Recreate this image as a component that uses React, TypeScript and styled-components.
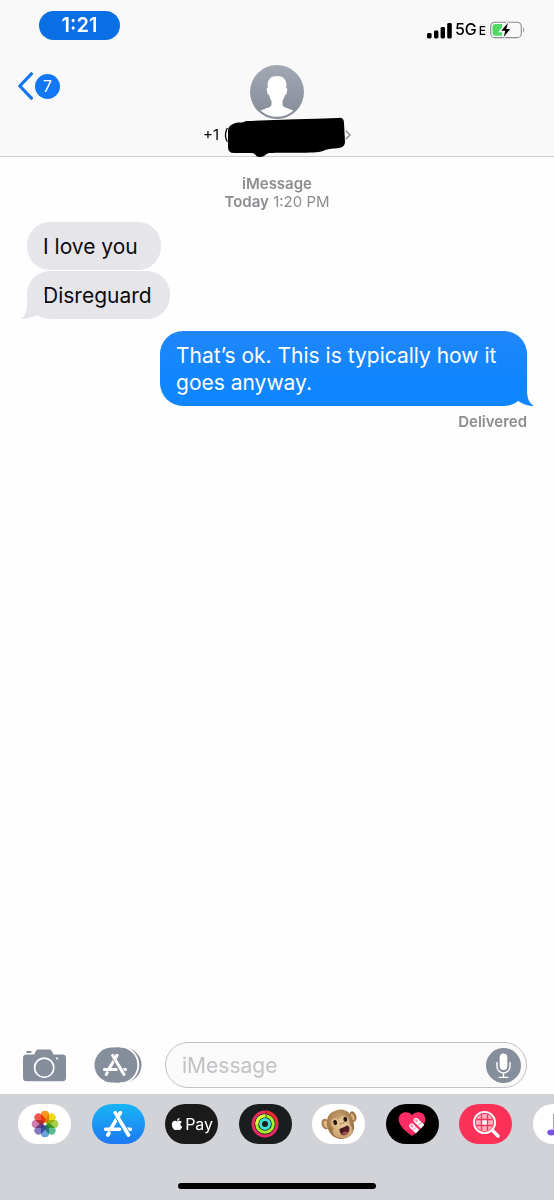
import React from "react";
import styled, { createGlobalStyle, css } from "styled-components";
import { FaApple } from "react-icons/fa";

const GlobalStyle = createGlobalStyle`
  *, *::before, *::after { box-sizing: border-box; }
  body {
    margin: 0;
    background: #ffffff;
    font-family: Inter, "Liberation Sans", sans-serif;
    -webkit-font-smoothing: antialiased;
  }
  button, input { font-family: inherit; }
`;

const Screen = styled.div`
  display: flex;
  flex-direction: column;
  min-height: 100vh;
  overflow: hidden;
  background: #fefefe;
`;

const Header = styled.header`
  background: #f9f9f9;
  border-bottom: 1px solid #cfcfd1;
`;

const StatusBar = styled.div`
  display: flex;
  justify-content: space-between;
  align-items: flex-start;
  padding: 11px 29px 0 39px;
`;

const TimePill = styled.time`
  width: 81px;
  border-radius: 15px;
  background: #0a6fe4;
  color: #ffffff;
  font-size: 20px;
  font-weight: 600;
  line-height: 29px;
  text-align: center;
`;

const StatusIcons = styled.div`
  display: flex;
  align-items: center;
  height: 20px;
  margin-top: 9px;
  color: #000000;
`;

const Network = styled.span`
  display: flex;
  align-items: baseline;
  gap: 2px;
  margin: 0 4px 0 3px;
  font-size: 16px;
  font-weight: 500;
  line-height: 20px;
`;

const NetworkSuffix = styled.span`
  font-size: 12px;
`;

const NavBar = styled.div`
  display: grid;
  grid-template-columns: 1fr auto 1fr;
  align-items: start;
  padding: 25px 18px 0;
`;

const BackButton = styled.button`
  display: flex;
  align-items: center;
  gap: 2px;
  justify-self: start;
  margin-top: 7px;
  padding: 0;
  border: 0;
  background: none;
`;

const UnreadBadge = styled.span`
  width: 25px;
  border-radius: 50%;
  background: #1377f5;
  color: #ffffff;
  font-size: 16px;
  line-height: 25px;
  text-align: center;
`;

const ContactButton = styled.button`
  display: flex;
  flex-direction: column;
  align-items: center;
  padding: 0;
  border: 0;
  background: none;
  color: #000000;
`;

const ContactLine = styled.span`
  position: relative;
  display: flex;
  align-items: center;
  justify-content: space-between;
  width: 148px;
  height: 37px;
  padding-bottom: 6px;
  font-size: 15px;
`;

const Marker = styled.svg`
  position: absolute;
  left: 23px;
  top: -2px;
`;

const Thread = styled.main`
  display: flex;
  flex: 1;
  flex-direction: column;
  padding: 18px 27px;
`;

const Stamp = styled.p`
  margin: 0 0 11px;
  color: #8c8c91;
  font-size: 15px;
  line-height: 18px;
  text-align: center;
`;

const StampStrong = styled.strong`
  font-weight: 600;
`;

const Bubble = styled.p<{ $sent?: boolean; $gap: number }>`
  position: relative;
  min-width: 134px;
  max-width: 367px;
  margin: ${(p) => p.$gap}px 0 0;
  padding: 11px 18px 10px 16px;
  border-radius: 23px;
  font-size: 21px;
  line-height: 27px;
  ${(p) =>
    p.$sent
      ? css`
          align-self: flex-end;
          background: linear-gradient(#2086fb, #1086fe calc(100% - 24px));
          color: #ffffff;
        `
      : css`
          align-self: flex-start;
          background: #e5e5ea;
          color: #0b0b0d;
        `}
`;

const TailShape = styled.svg<{ $sent?: boolean }>`
  position: absolute;
  bottom: 0;
  ${(p) => (p.$sent ? "right: -7px;" : "left: -6px;")}
`;

const Receipt = styled.p`
  align-self: flex-end;
  margin: 7px 0 0;
  color: #8c8c91;
  font-size: 15px;
  font-weight: 600;
  line-height: 18px;
`;

const Composer = styled.form`
  display: flex;
  align-items: center;
  padding: 0 27px 6px 23px;
`;

const ToolButton = styled.button<{ $after: number }>`
  display: flex;
  flex: none;
  margin-right: ${(p) => p.$after}px;
  padding: 0;
  border: 0;
  background: none;
`;

const Field = styled.div`
  display: flex;
  flex: 1;
  align-items: center;
  min-width: 0;
  height: 46px;
  padding: 0 5px 0 16px;
  border: 1px solid #c2c2c6;
  border-radius: 23px;
  background: #fafafa;
`;

const FieldInput = styled.input`
  flex: 1;
  min-width: 0;
  padding: 2px 0 0;
  border: 0;
  outline: 0;
  background: none;
  color: #000000;
  font-size: 21px;
  line-height: 28px;
  &::placeholder { color: #c2c2c6; opacity: 1; }
`;

const Drawer = styled.footer`
  display: flex;
  flex-direction: column;
  align-items: center;
  gap: 39px;
  padding: 10px 0 11px;
  background: #d1d3d9;
`;

const AppStrip = styled.nav`
  display: flex;
  align-self: stretch;
  justify-content: space-between;
  margin: 0 -32px 0 18px;
`;

const AppPill = styled.button<{ $fill: string }>`
  display: flex;
  flex: none;
  align-items: center;
  justify-content: center;
  gap: 1px;
  width: 53px;
  height: 40px;
  padding: 0;
  border: 0;
  border-radius: 20px;
  background: ${(p) => p.$fill};
  color: #ffffff;
  font-size: 16px;
`;

const HomeIndicator = styled.div`
  width: 198px;
  height: 6px;
  border-radius: 3px;
  background: #000000;
`;

const SignalIcon = () => (
  <svg width="25" height="17" viewBox="0 0 25 17" aria-hidden="true">
    <rect x="0" y="11" width="4.6" height="5.5" rx="1.4" />
    <rect x="7" y="8.5" width="4.4" height="8" rx="1.4" />
    <rect x="13.6" y="5" width="4.4" height="11.5" rx="1.4" />
    <rect x="20.2" y="1" width="4.6" height="15.5" rx="1.4" />
  </svg>
);

const BatteryIcon = () => (
  <svg width="35" height="18" viewBox="0 0 35 18" aria-hidden="true">
    <rect x="0.7" y="1.2" width="30.6" height="15.4" rx="4.2" fill="none" stroke="#8b8b8b" strokeWidth="1.1" />
    <path d="M2.5 6Q2.5 3 5.5 3H12V14.8H5.5Q2.5 14.8 2.5 12Z" fill="#50d965" />
    <path d="M33 6.2Q35 9 33 11.8Z" fill="#8b8b8b" />
    <path d="M18 1.800 11.300 9.800h4l-1.600 6.200L20.200 8h-3.900z" fill="#000" stroke="#f9f9f9" strokeWidth="3" paintOrder="stroke" />
  </svg>
);

const BackChevron = () => (
  <svg width="15" height="28" viewBox="0 0 15 28" fill="none" stroke="#1377f5" strokeWidth="3.2" strokeLinecap="round" strokeLinejoin="round" aria-hidden="true">
    <path d="M13.4 1.8 1.8 14l11.6 12.2" />
  </svg>
);

const Avatar = () => (
  <svg width="54" height="54" viewBox="0 0 54 54" aria-hidden="true">
    <defs>
      <linearGradient id="avatarFill" x1="0" y1="0" x2="0" y2="1">
        <stop offset="0" stopColor="#a2a7b4" />
        <stop offset="1" stopColor="#868b98" />
      </linearGradient>
      <clipPath id="avatarClip"><circle cx="27" cy="27" r="24.8" /></clipPath>
    </defs>
    <circle cx="27" cy="27" r="27" fill="url(#avatarFill)" />
    <path
      clipPath="url(#avatarClip)"
      fill="#fff"
      d="M27 11C21 11 17.4 14.5 17.6 20.5L17.9 22.8C16.4 23 16.6 25 17.2 27.5C17.6 29.5 18.3 30.2 19.3 30.2C19.8 33 20.8 34.7 21.5 35.8V40.2C20.5 42.7 13 43.6 7.5 47.5L18 55H37L46.500 47.500C41 43.600 33.500 42.700 32.500 40.200V35.800C33.200 34.700 34.200 33 34.700 30.200C35.700 30.200 36.400 29.500 36.800 27.500C37.400 25 37.600 23 36.100 22.800L36.400 20.500C36.600 14.500 33 11 27 11Z"
    />
  </svg>
);

const DetailChevron = () => (
  <svg width="6" height="10" viewBox="0 0 6 10" fill="none" stroke="#8c8f96" strokeWidth="1.5" aria-hidden="true">
    <path d="M.8.8 5 5 .8 9.200" />
  </svg>
);

const CameraIcon = () => (
  <svg width="43" height="33" viewBox="0 0 43 33" fill="#868e9c" aria-hidden="true">
    <path d="M3.500 5.400H10.800C12.300 5.400 12.200 1 14.600.4H27C29.600 1 29.500 5.400 31.200 5.400H39.500Q43 5.400 43 8.800V28.700Q43 32.200 39.500 32.200H3.500Q0 32.200 0 28.700V8.800Q0 5.400 3.500 5.400Z" />
    <rect x="3.200" y="2" width="5.400" height="2" rx="1" />
    <circle cx="21.200" cy="18.700" r="9.600" fill="none" stroke="#fff" strokeWidth="1.700" />
    <circle cx="34" cy="9.500" r="1.100" fill="#fff" />
  </svg>
);

const AppStoreGlyph = ({ back, w }: { back: string; w: number }) => (
  <g fill="none" strokeLinecap="round" stroke="#fff" strokeWidth={w}>
    <path d="M1.700 18.200H15.500M22.500 18.200H26.300" />
    <path d="M16.300 1.700 7.300 17M5 22 3.800 24" />
    <path d="M11.200 1.700 24.500 24" stroke={back} strokeWidth={w + 1.600} strokeLinecap="butt" />
    <path d="M11.200 1.700 24.500 24M16.300 1.700 15 4" />
  </g>
);

const AppsIcon = () => (
  <svg width="48" height="36" viewBox="0 0 48 36" aria-hidden="true">
    <rect x="6" y=".5" width="41.500" height="35" rx="17.500" fill="#868e9c" />
    <rect x=".500" y=".500" width="42.500" height="35" rx="17.500" fill="#868e9c" />
    <path d="M27 -.500A18.500 18.500 0 0 1 27 36.500" transform="translate(-1.200 0)" fill="none" stroke="#fefefe" strokeWidth="1.900" />
    <svg x="9" y="6.500" width="24" height="23" viewBox="0 0 28 26">
      <AppStoreGlyph back="#868e9c" w={3.600} />
    </svg>
  </svg>
);

const MicIcon = () => (
  <svg width="35" height="35" viewBox="0 0 35 35" aria-hidden="true">
    <circle cx="17.500" cy="17.500" r="17.500" fill="#868e9c" />
    <rect x="13.700" y="5.500" width="7.600" height="16.500" rx="3.800" fill="#fff" />
    <path d="M11 14.500V18.500A6.500 6.500 0 0 0 24 18.500V14.500M17.500 25V29.300M13.200 29.400H21.800" fill="none" stroke="#fff" strokeWidth="1.400" strokeLinecap="round" />
  </svg>
);

const PETALS = ["#f9961e", "#eadb12", "#a5cf4e", "#5dbb8c", "#68a2d8", "#8579be", "#cb7fae", "#ef5a50"];

const Petal = styled.rect`
  mix-blend-mode: multiply;
`;

const PhotosIcon = () => (
  <svg width="28" height="28" viewBox="0 0 28 28" aria-hidden="true">
    {PETALS.map((color, i) => (
      <Petal
        key={color}
        x="9.900"
        y=".700"
        width="8.200"
        height="12"
        rx="4.100"
        fill={color}
        transform={`rotate(${i * 45} 14 14)`}
      />
    ))}
  </svg>
);

const ActivityIcon = () => (
  <svg width="28" height="28" viewBox="0 0 28 28" fill="none" aria-hidden="true">
    <circle cx="14" cy="14" r="12" stroke="#ea2a62" strokeWidth="3" />
    <path d="M14 2A12 12 0 0 1 26 14" stroke="#ee2b30" strokeWidth="3" />
    <circle cx="14" cy="14" r="8.300" stroke="#a5f02c" strokeWidth="3" />
    <path d="M14 5.700A8.300 8.300 0 0 0 5.700 14" stroke="#d8fa3c" strokeWidth="3" />
    <circle cx="14" cy="14" r="4.500" stroke="#3fe0dc" strokeWidth="3" />
    <path d="M14.500 1.500 15.800 2.600 14.500 3.700M14.500 5.200 15.500 6 14.500 6.900" stroke="#1b1c1e" strokeWidth=".800" />
  </svg>
);

const MonkeyIcon = () => (
  <svg width="36" height="32" viewBox="0 0 36 32" aria-hidden="true">
    <defs>
      <radialGradient id="fur" cx=".45" cy=".3" r=".75">
        <stop offset="0" stopColor="#c7a26d" />
        <stop offset="1" stopColor="#8c643a" />
      </radialGradient>
      <radialGradient id="face" cx=".5" cy=".35" r=".7">
        <stop offset="0" stopColor="#ecce9f" />
        <stop offset="1" stopColor="#c79c69" />
      </radialGradient>
    </defs>
    <ellipse cx="4.500" cy="16" rx="3.800" ry="5.300" transform="rotate(-18 4.500 16)" fill="#a67847" />
    <ellipse cx="5" cy="16.300" rx="2.300" ry="3.800" transform="rotate(-18 5 16.300)" fill="#dfb787" />
    <ellipse cx="32" cy="8.500" rx="3.200" ry="5.300" transform="rotate(-18 32 8.500)" fill="#9b6d3e" />
    <ellipse cx="31.500" cy="9" rx="1.900" ry="3.700" transform="rotate(-18 31.500 9)" fill="#dbb080" />
    <path d="M15 2.500C20 0 27.500 2 30.200 8C32.500 13 35 20 31 25.500C27 31.500 18 32.500 12.500 28.500C7 24.500 4.500 16 6.500 10C8 5.500 11.500 3.500 15 2.500Z" fill="url(#fur)" />
    <path d="M9.800 14C10 10 14 8.500 17.500 11.500C19.500 7.500 24.500 6.500 27 9.800C28.800 12.500 28.200 14.500 29.500 17C32.500 21 32.500 25 29 28C24.500 31 17 31 13.500 27.500C11 24.500 12 21.500 12.800 20C10.800 19 9.500 17 9.800 14Z" fill="url(#face)" />
    <ellipse cx="14.200" cy="14.500" rx="1.900" ry="2.500" transform="rotate(-15 14.200 14.500)" fill="#21160f" />
    <ellipse cx="24.300" cy="11.300" rx="1.900" ry="2.500" transform="rotate(-15 24.300 11.300)" fill="#21160f" />
    <path d="M19 16l1.200-.300M21.800 15.100l1.200-.400" stroke="#8f6034" strokeWidth="1" strokeLinecap="round" />
    <path d="M19 20.800C20.500 19.800 23.500 19 25 18C27.500 17 29.200 19.500 28 23C26.500 27 22.500 29 20 26C19.300 24.500 17.500 22 19 20.800Z" fill="#4d1b20" />
    <path d="M21 26C21.500 24 25 22.800 26.800 24.200C25.500 27.200 22.500 27.700 21 26Z" fill="#a5505a" />
  </svg>
);

const HeartTouchIcon = () => (
  <svg width="28" height="26" viewBox="0 0 28 26" aria-hidden="true">
    <defs>
      <clipPath id="heart">
        <path d="M14 25C8 20.500.700 15 .700 8.300C.700 1 10 -1 14 4.200C18 -1 27.300 1 27.300 8.300C27.300 15 20 20.500 14 25Z" />
      </clipPath>
    </defs>
    <rect clipPath="url(#heart)" width="28" height="26" fill="#fb2c63" />
    <g fill="none">
      <path d="M13.800 15 19.500 20.700M18.200 9.500 24.500 15.800" stroke="#fff" strokeWidth="4.800" />
      <path d="M13.500 14.700 14 15.200M17.900 9.200 18.400 9.700" stroke="#fff" strokeWidth="4.800" strokeLinecap="round" />
      <path d="M13.300 14.500 14.300 15.500M17.700 9 18.700 10" stroke="#fb8fab" strokeWidth="2.400" strokeLinecap="round" />
      <path d="M15.200 19.300 18.300 16.200M20.300 14.500 23.400 11.400" stroke="#fb2c63" strokeWidth=".700" />
    </g>
  </svg>
);

const ImageSearchIcon = () => (
  <svg width="28" height="28" viewBox="0 0 28 28" aria-hidden="true">
    <defs><clipPath id="lens"><circle cx="12.500" cy="12.500" r="8.800" /></clipPath></defs>
    <circle cx="12.500" cy="12.500" r="10.600" fill="none" stroke="#fff" strokeWidth="1.800" />
    <g clipPath="url(#lens)">
      <rect x="3" y="3" width="19" height="19" fill="#ffb0bc" />
      <rect x="10" y="10" width="5" height="5" fill="#fff" />
      <path d="M9.500 3V22M15.500 3V22M3 9.500H22M3 15.500H22" stroke="#fb3158" strokeWidth="1.300" />
    </g>
    <path d="M20.300 20.300 26 26" stroke="#fff" strokeWidth="3.400" strokeLinecap="round" />
  </svg>
);

const MusicIcon = () => (
  <svg width="26" height="28" viewBox="0 0 26 28" aria-hidden="true">
    <path d="M8.500 22V5L22 2V19" fill="none" stroke="#b45bea" strokeWidth="2.500" />
    <ellipse cx="5.500" cy="22.500" rx="4.200" ry="3" fill="#7a52f0" />
    <ellipse cx="19" cy="19.500" rx="4.200" ry="3" fill="#e04f9d" />
  </svg>
);

const Tail = ({ sent }: { sent?: boolean }) => (
  <TailShape $sent={sent} width="24" height="24" viewBox="0 0 24 24" aria-hidden="true">
    {sent ? (
      <path fill="#1086fe" d="M17 0V8C17 16 19 21 24 24C18 24 13 22 9 19.500L0 10V0Z" />
    ) : (
      <path fill="#e5e5ea" d="M6 0V9C6 16 4 21 0 24C6 24 11 22 16 20L24 10V0Z" />
    )}
  </TailShape>
);

const APPS: { label: string; fill: string; content: React.ReactNode }[] = [
  { label: "Photos", fill: "#ffffff", content: <PhotosIcon /> },
  {
    label: "App Store",
    fill: "linear-gradient(#18b4f6, #1e78f2)",
    content: (
      <svg width="28" height="26" viewBox="0 0 28 26" aria-hidden="true">
        <AppStoreGlyph back="#1c96f4" w={3.6} />
      </svg>
    ),
  },
  { label: "Apple Pay", fill: "#1a1a1a", content: <><FaApple size={14} /><span>Pay</span></> },
  { label: "Activity", fill: "#1b1c1e", content: <ActivityIcon /> },
  { label: "Animoji", fill: "#ffffff", content: <MonkeyIcon /> },
  { label: "Digital Touch", fill: "#000000", content: <HeartTouchIcon /> },
  { label: "Image search", fill: "#fb3158", content: <ImageSearchIcon /> },
  { label: "Music", fill: "#ffffff", content: <MusicIcon /> },
];

export default function App() {
  return (
    <Screen>
      <GlobalStyle />
      <Header>
        <StatusBar>
          <TimePill>1:21</TimePill>
          <StatusIcons>
            <SignalIcon />
            <Network>5G<NetworkSuffix>E</NetworkSuffix></Network>
            <BatteryIcon />
          </StatusIcons>
        </StatusBar>
        <NavBar>
          <BackButton type="button" aria-label="Back, 7 unread">
            <BackChevron />
            <UnreadBadge>7</UnreadBadge>
          </BackButton>
          <ContactButton type="button" aria-label="Contact details">
            <Avatar />
            <ContactLine>
              <span>+1 (</span>
              <DetailChevron />
              <Marker width="122" height="42" viewBox="0 0 122 42" aria-hidden="true">
                <path
                  d="M7 7C12 4 16 7 20 4C50 3 80 2 112 1Q118 0 118 6L119 25Q119 30 113 31C108 32 103 31 97 34C88 37 60 35 43 36C39 37 39 40 34 40C29 40 31 37 26 36H8Q2 36 2 30V14Q2 9 7 7Z"
                />
              </Marker>
            </ContactLine>
          </ContactButton>
        </NavBar>
      </Header>

      <Thread>
        <Stamp>
          <StampStrong>iMessage</StampStrong>
          <br />
          <StampStrong>Today</StampStrong> 1:20 PM
        </Stamp>
        <Bubble $gap={0}>I love you</Bubble>
        <Bubble $gap={1}>
          <Tail />
          Disreguard
        </Bubble>
        <Bubble $sent $gap={12}>
          <Tail sent />
          That’s ok. This is typically how it goes anyway.
        </Bubble>
        <Receipt>Delivered</Receipt>
      </Thread>

      <Composer>
        <ToolButton type="button" aria-label="Camera" $after={28}><CameraIcon /></ToolButton>
        <ToolButton type="button" aria-label="Apps" $after={23}><AppsIcon /></ToolButton>
        <Field>
          <FieldInput type="text" placeholder="iMessage" aria-label="iMessage" />
          <ToolButton type="button" aria-label="Record audio" $after={0}><MicIcon /></ToolButton>
        </Field>
      </Composer>

      <Drawer>
        <AppStrip aria-label="iMessage apps">
          {APPS.map((app) => (
            <AppPill key={app.label} type="button" aria-label={app.label} $fill={app.fill}>
              {app.content}
            </AppPill>
          ))}
        </AppStrip>
        <HomeIndicator />
      </Drawer>
    </Screen>
  );
}
